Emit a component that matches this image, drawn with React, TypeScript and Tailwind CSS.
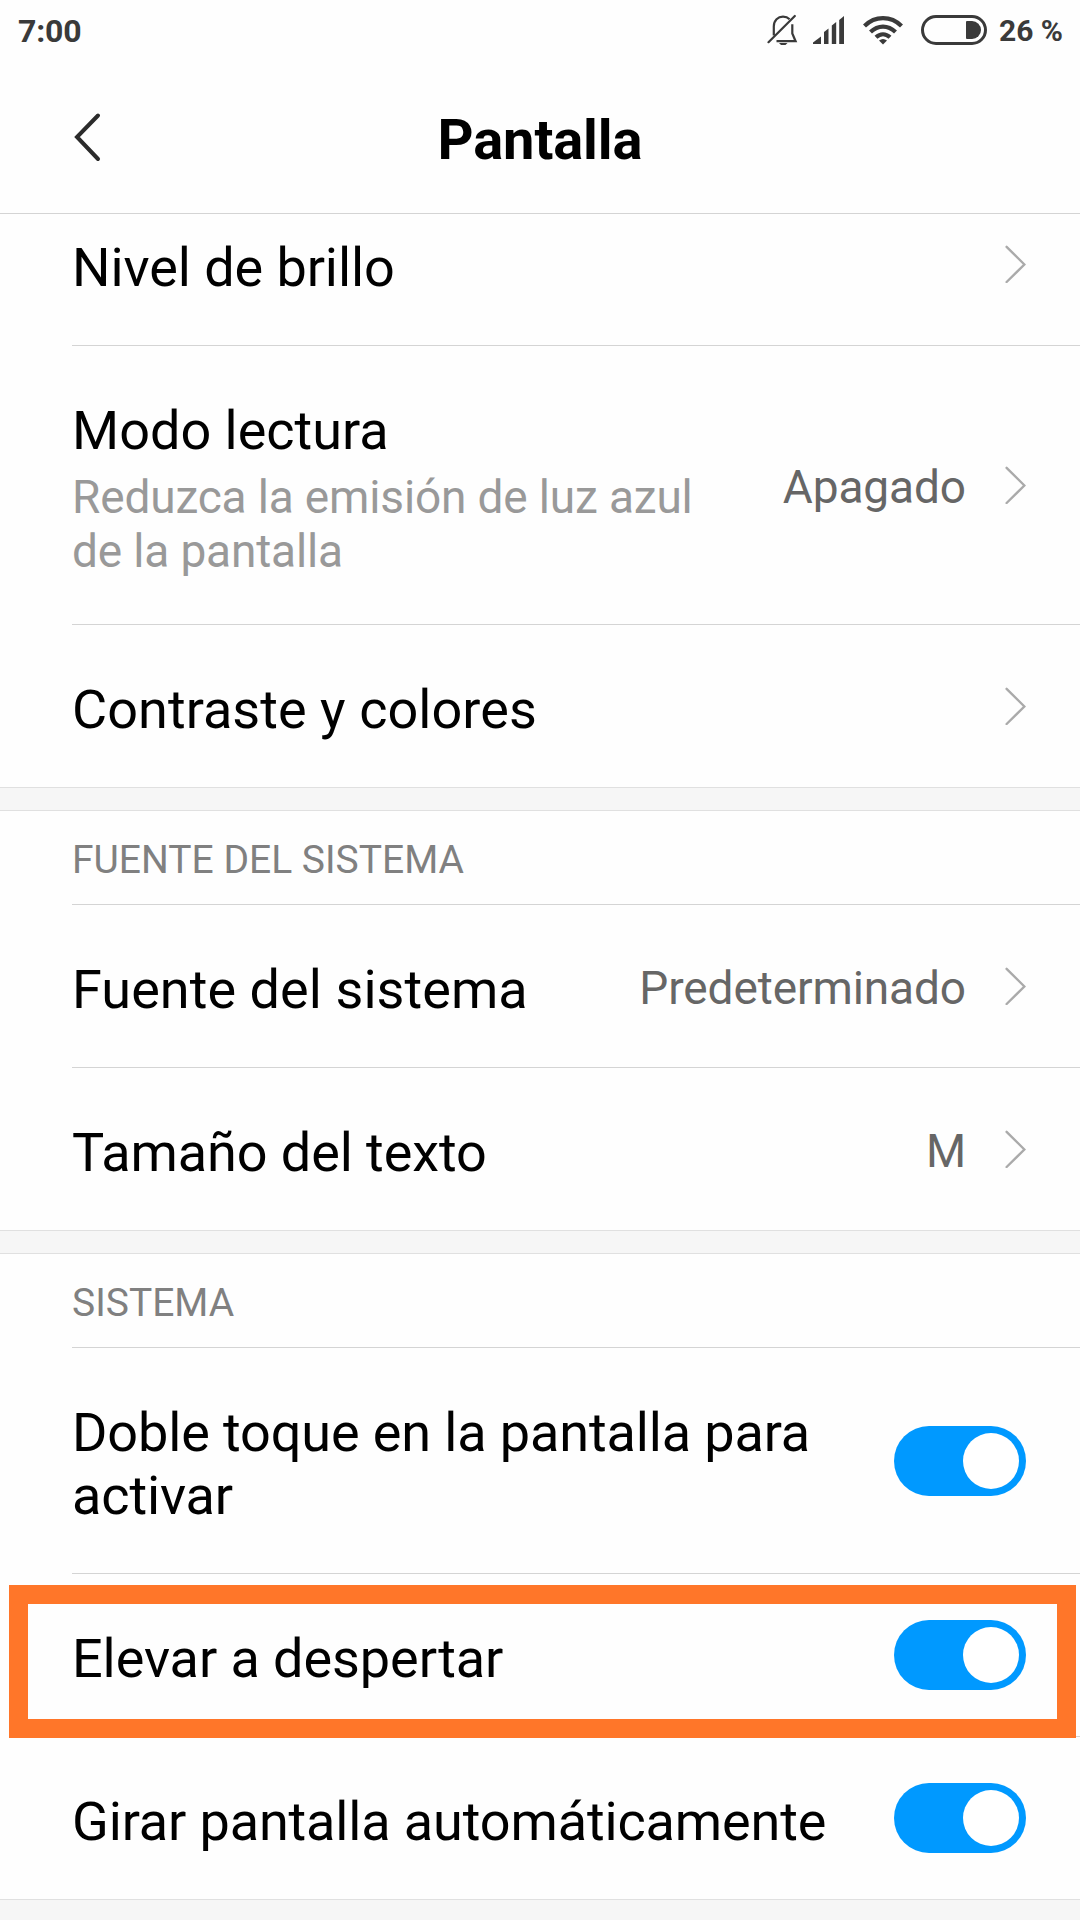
import type { ReactNode } from 'react';

const ChevronRight = () => (
  <svg width="22" height="38" viewBox="0 0 22 38" fill="none" className="shrink-0">
    <path d="M2.6 1.8 L20.4 19.5 L2.6 37" stroke="#aaaaaa" strokeWidth="2.4" strokeLinecap="round" />
  </svg>
);

const Switch = () => (
  <div className="flex h-[70px] w-[132px] shrink-0 items-center justify-end rounded-full bg-[#0099ff] pr-[7px]">
    <div className="size-14 rounded-full bg-white" />
  </div>
);

const StatusBar = () => (
  <div className="flex h-[60px] items-center pr-[17px] pl-[18px] text-[#3a3a3a]">
    <span className="pt-[2px] text-[32px] leading-none font-bold tracking-[-0.2px]">7:00</span>
    <div className="ml-auto flex items-center">
      {/* silent bell */}
      <svg width="32" height="32" viewBox="0 0 32 32" fill="none" stroke="currentColor" strokeWidth="2.2">
        <path d="M6.8 21.5 V12.5 C6.8 6.5 11 2.6 16 2.6 C18.6 2.6 21 3.6 22.6 5.2" />
        <path d="M25.3 10.2 V19.5 L28.6 27.2 H9.5" />
        <path d="M1.5 28.2 L27.8 2" strokeLinecap="round" />
        <path d="M12 29 H20.5 L18.5 31 H14 Z" fill="currentColor" stroke="none" />
      </svg>
      <svg width="32" height="30" viewBox="0 0 32 30" fill="currentColor" className="ml-[14px]">
        <path d="M0 29 V27.5 L8 21.5 V29 Z" />
        <path d="M11 29 V17 L15.5 13.5 V29 Z" />
        <path d="M18.8 29 V10.5 L23.2 7 V29 Z" />
        <path d="M26.2 29 V5 L31 1 V29 Z" />
      </svg>
      <svg width="40" height="30" viewBox="0 0 40 30" fill="none" stroke="currentColor" strokeWidth="4.2" className="ml-[18px]">
        <path d="M1.5 11 C12 0.5 28 0.5 38.5 11" />
        <path d="M7.5 17 C15 9.7 25 9.7 32.5 17" />
        <path d="M13 22.3 C17.2 18.3 22.8 18.3 27 22.3" />
        <path d="M16 25.5 Q20 22.5 24 25.5 L20 29.5 Z" fill="currentColor" stroke="none" />
      </svg>
      <div className="ml-[18px] flex h-[30px] w-[66px] items-center justify-end rounded-full border-[3px] border-current pr-[3px]">
        <div className="h-[18px] w-[15px] rounded-l-[1px] rounded-r-[9px] bg-current" />
      </div>
      <span className="ml-[12px] pt-[2px] text-[30px] leading-none font-bold">26 %</span>
    </div>
  </div>
);

const Header = () => (
  <header className="h-[214px] border-b border-[#d4d4d4]">
    <StatusBar />
    <div className="grid h-[154px] grid-cols-[1fr_auto_1fr] items-center">
      <svg width="28" height="50" viewBox="0 0 28 50" fill="none" className="ml-[73px]">
        <path d="M25 3.5 L4 25 L25 47" stroke="#2b2b2b" strokeWidth="4" strokeLinecap="round" />
      </svg>
      <h1 className="pt-[5px] text-[56px] leading-none font-bold tracking-[-0.1px] text-black">Pantalla</h1>
    </div>
  </header>
);

type RowProps = {
  title: string;
  titleClass?: string;
  summary?: string;
  value?: string;
  toggle?: boolean;
  last?: boolean;
  className?: string;
  children?: ReactNode;
};

const Row = ({ title, titleClass = '', summary, value, toggle, last, className = 'h-[163px]', children }: RowProps) => (
  <div className={`relative flex ${last ? '' : 'pl-[72px]'} ${className}`}>
    <div className={`flex flex-1 items-center border-b pr-[54px] ${last ? 'border-[#e0e0e0] pl-[72px]' : 'border-[#d4d4d4]'}`}>
      <div className="flex-1 whitespace-pre-line">
        <div className={`pt-1.5 text-[54px] leading-[63px] text-black ${titleClass}`}>{title}</div>
        {summary && (
          <div className="mt-2 text-[46px] leading-[54px] tracking-[-0.16px] text-[#999999]">{summary}</div>
        )}
      </div>
      {value && (
        <span className="mr-[38px] pt-1 text-[46px] leading-[54px] tracking-[-0.1px] text-[#666666]">{value}</span>
      )}
      {toggle ? <Switch /> : <ChevronRight />}
    </div>
    {children}
  </div>
);

const SectionTitle = ({ children }: { children: ReactNode }) => (
  <>
    <div className="h-[23px] border-b border-[#e0e0e0] bg-[#f6f6f6]" />
    <div className="flex h-[94px] pl-[72px]">
      <h2 className="flex flex-1 items-center border-b border-[#d4d4d4] pt-1.5 text-[39px] text-[#808080]">{children}</h2>
    </div>
  </>
);

export default function App() {
  return (
    <div className="flex h-[1920px] w-[1080px] flex-col overflow-hidden bg-[#fefefe] font-['Roboto',sans-serif]">
      <Header />
      <main className="flex-1 overflow-hidden">
        {/* first row is partly scrolled under the header */}
        <Row title="Nivel de brillo" titleClass="tracking-[-0.08px]" className="-mt-[31px] h-[163px]" />
        <Row
          title="Modo lectura"
          summary={'Reduzca la emisión de luz azul\nde la pantalla'}
          value="Apagado"
          className="h-[279px]"
        />
        <Row title="Contraste y colores" titleClass="tracking-[0.05px]" last />

        <SectionTitle>FUENTE DEL SISTEMA</SectionTitle>
        <Row title="Fuente del sistema" titleClass="tracking-[0.06px]" value="Predeterminado" />
        <Row title="Tamaño del texto" titleClass="tracking-[-0.08px]" value="M" last />

        <SectionTitle>SISTEMA</SectionTitle>
        <Row
          title={'Doble toque en la pantalla para\nactivar'}
          titleClass="tracking-[-0.12px]"
          toggle
          className="h-[226px]"
        />
        <Row title="Elevar a despertar" titleClass="tracking-[-0.07px]" toggle>
          <div className="absolute top-[11px] left-[9px] h-[153px] w-[1067px] border-[19px] border-[#ff7629]" />
        </Row>
        <Row title="Girar pantalla automáticamente" titleClass="tracking-[-0.13px]" toggle last />
        <div className="h-5 bg-[#f6f6f6]" />
      </main>
    </div>
  );
}
